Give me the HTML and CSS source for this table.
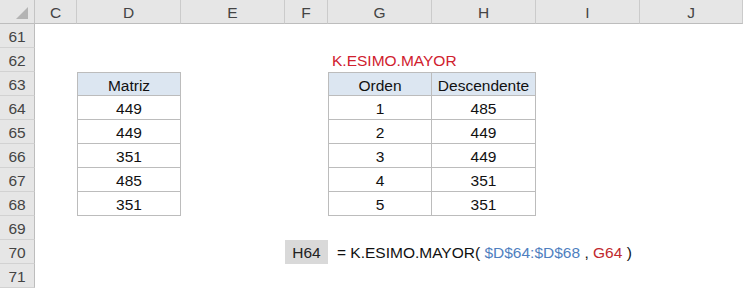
FILE: index.html
```html
<!DOCTYPE html>
<html lang="es">
<head>
<meta charset="utf-8">
<title>K.ESIMO.MAYOR</title>
<link rel="stylesheet" href="styles.css">
</head>
<body>
<div class="sheet">
  <div class="corner"><span class="tri"></span></div>
  <div class="ch">C</div><div class="ch">D</div><div class="ch">E</div><div class="ch">F</div><div class="ch">G</div><div class="ch">H</div><div class="ch">I</div><div class="ch">J</div>

  <div class="rh">61</div><div></div><div></div><div></div><div></div><div></div><div></div><div></div><div></div>

  <div class="rh">62</div><div></div><div></div><div></div><div></div><div class="title">K.ESIMO.MAYOR</div><div></div><div></div><div></div>

  <div class="rh">63</div><div></div><div class="c tc tl tt hd">Matriz</div><div></div><div></div><div class="c tc tl tt hd">Orden</div><div class="c tc tt hd">Descendente</div><div></div><div></div>

  <div class="rh">64</div><div></div><div class="c tc tl">449</div><div></div><div></div><div class="c tc tl">1</div><div class="c tc">485</div><div></div><div></div>
  <div class="rh">65</div><div></div><div class="c tc tl">449</div><div></div><div></div><div class="c tc tl">2</div><div class="c tc">449</div><div></div><div></div>
  <div class="rh">66</div><div></div><div class="c tc tl">351</div><div></div><div></div><div class="c tc tl">3</div><div class="c tc">449</div><div></div><div></div>
  <div class="rh">67</div><div></div><div class="c tc tl">485</div><div></div><div></div><div class="c tc tl">4</div><div class="c tc">351</div><div></div><div></div>
  <div class="rh">68</div><div></div><div class="c tc tl">351</div><div></div><div></div><div class="c tc tl">5</div><div class="c tc">351</div><div></div><div></div>

  <div class="rh">69</div><div></div><div></div><div></div><div></div><div></div><div></div><div></div><div></div>

  <div class="rh">70</div><div></div><div></div><div></div><div class="c ref">H64</div><div class="formula">= K.ESIMO.MAYOR( <span class="blue">$D$64:$D$68</span> , <span class="red">G64</span> )</div>

  <div class="rh">71</div><div></div><div></div><div></div><div></div><div></div><div></div><div></div><div></div>
</div>
</body>
</html>
```

FILE: styles.css
```css
html, body {
  margin: 0;
  padding: 0;
  background: #ffffff;
}

body {
  font-family: "Liberation Sans", Arial, sans-serif;
  font-size: 15.5px;
  color: #111111;
}

.sheet {
  display: grid;
  grid-template-columns: 35px 42px 104px 104px 43px 104px 104px 104px 103px;
  grid-template-rows: repeat(12, 24px);
}

.sheet > div {
  box-sizing: border-box;
  line-height: 22px;
  padding-top: 2px;
  white-space: nowrap;
}

.corner {
  background: #e6e6e6;
  border-right: 1px solid #c4c4c4;
  border-bottom: 1px solid #bdbdbd;
  display: flex;
  justify-content: flex-end;
  align-items: flex-end;
  padding: 0 6px 4px 0 !important;
}

.tri {
  width: 12px;
  height: 12px;
  background: #b4b4b4;
  clip-path: polygon(100% 0, 100% 100%, 0 100%);
}

.ch {
  background: #e6e6e6;
  color: #444444;
  text-align: center;
  border-right: 1px solid #cbcbcb;
  border-bottom: 1px solid #bdbdbd;
}

.rh {
  background: #e6e6e6;
  color: #444444;
  text-align: center;
  border-right: 1px solid #bdbdbd;
  border-bottom: 1px solid #d2d2d2;
}

.c {
  text-align: center;
}

.tc {
  border-right: 1px solid #bcbcbc;
  border-bottom: 1px solid #bcbcbc;
}

.tl {
  border-left: 1px solid #bcbcbc;
}

.tt {
  border-top: 1px solid #bcbcbc;
}

.hd {
  background: #dce6f1;
}

.title {
  color: #d0202e;
  padding-left: 4px;
  overflow: visible;
}

.ref {
  background: #d9d9d9;
  color: #222222;
}

.formula {
  grid-column: span 4;
  padding-left: 9px;
  color: #111111;
}

.blue {
  color: #4f7fbf;
}

.red {
  color: #c0282e;
}
```
